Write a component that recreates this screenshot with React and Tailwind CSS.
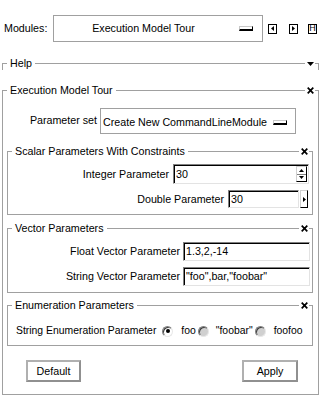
import React from 'react';

const CloseX = () => (
    <svg width="7" height="7" viewBox="0 0 7 7" className="shrink-0">
        <path d="M0.7 0.7L6.3 6.3M6.3 0.7L0.7 6.3" stroke="#000" strokeWidth="1.7" />
    </svg>
);

const DownArrow = () => (
    <svg width="7" height="4" viewBox="0 0 7 4" className="shrink-0">
        <path d="M0 0H7L3.5 4Z" fill="#000" />
    </svg>
);

// group frame: title sits on the top border, icon on the right end
const FrameHeader = ({ title, icon }) => (
    <div className="-mx-px -mt-[7px] flex h-[15px] items-center">
        <span className="h-px w-[5px] bg-[#a0a0a0]" />
        <span className="px-[3px] leading-none whitespace-nowrap">{title}</span>
        <span className="h-px flex-1 bg-[#a0a0a0]" />
        <span className="flex items-center pl-[2px] pr-px">{icon}</span>
        <span className="h-px w-[4px] bg-[#a0a0a0]" />
    </div>
);

const Frame = ({ title, icon, className, children }) => (
    <div className={`flex flex-col border-x border-b border-[#a0a0a0] ${className}`}>
        <FrameHeader title={title} icon={icon} />
        {children}
    </div>
);

const Sunken = ({ className, children }) => (
    <div className={`flex items-center border border-t-[#808080] border-l-[#808080] border-r-[#e3e3e3] border-b-[#e3e3e3] bg-white pl-[2px] shadow-[inset_1px_1px_0_#000] ${className}`}>
        {children}
    </div>
);

const MenuIndicator = ({ className }) => (
    <span className={`block h-[5px] w-[14px] shrink-0 border border-t-[#c8c8c8] border-l-[#c8c8c8] border-r-black border-b-2 border-b-black bg-white ${className}`} />
);

const Radio = ({ checked }) => (
    <span className={`flex h-[11px] w-[11px] shrink-0 items-center justify-center rounded-full border border-t-[#808080] border-l-[#808080] border-r-[#e8e8e8] border-b-[#e8e8e8] shadow-[inset_1px_1px_0_#404040] ${checked ? 'bg-white' : 'bg-[#d0d0d0]'}`}>
        {checked && <span className="h-[4px] w-[4px] rounded-full bg-black" />}
    </span>
);

const NavBox = ({ children, className }) => (
    <span className={`flex h-[10px] w-[9px] items-center justify-center border border-black text-[9px] leading-none ${className}`}>
        {children}
    </span>
);

const App = () => {
    return (
        <div className="h-[408px] w-[325px] overflow-hidden bg-white font-['Liberation_Sans',Arial,sans-serif] text-[10.7px] text-black">
            {/* module selector */}
            <div className="flex items-center pt-[15px]">
                <span className="w-[53px] pl-[4px]">Modules:</span>
                <div className="flex h-[27px] w-[210px] items-center border border-[#a0a0a0]">
                    <span className="flex-1 text-center">Execution Model Tour</span>
                    <MenuIndicator className="ml-[6px] mr-[9px]" />
                </div>
                <NavBox className="ml-[5px]">
                    <svg width="3" height="5" viewBox="0 0 3 5"><path d="M3 0V5L0 2.5Z" fill="#000" /></svg>
                </NavBox>
                <NavBox className="ml-[12px]">
                    <svg width="3" height="5" viewBox="0 0 3 5"><path d="M0 0V5L3 2.5Z" fill="#000" /></svg>
                </NavBox>
                <NavBox className="ml-[10px]">H</NavBox>
            </div>

            {/* collapsed help frame */}
            <div className="ml-[2px] mr-[6px] mt-[22px] flex h-[6px] flex-col border-x border-[#a0a0a0]">
                <FrameHeader title="Help" icon={<DownArrow />} />
            </div>

            {/* module panel */}
            <Frame title="Execution Model Tour" icon={<CloseX />} className="ml-[2px] mr-[6px] mt-[20px] pb-[12px]">
                <div className="mt-[10px] flex items-start justify-end pr-[22px]">
                    <span className="mr-[3px] pt-[4px]">Parameter set</span>
                    <div className="flex h-[26px] w-[196px] items-center border border-[#a0a0a0] pl-[2px] pt-[3px]">
                        <span className="flex-1 whitespace-nowrap">Create New CommandLineModule</span>
                        <MenuIndicator className="mr-[8px]" />
                    </div>
                </div>

                <Frame title="Scalar Parameters With Constraints" icon={<CloseX />} className="ml-[4px] mr-[5px] mt-[17px] pb-[6px]">
                    <div className="mt-[5px] flex items-center justify-end pr-[3px]">
                        <span className="mr-[4px]">Integer Parameter</span>
                        <Sunken className="h-[20px] w-[136px]">
                            <span className="flex-1">30</span>
                            <div className="mr-px flex h-[16px] w-[11px] flex-col border border-t-[#d0d0d0] border-l-[#d0d0d0] border-r-black border-b-black">
                                <span className="flex flex-1 items-center justify-center border-b border-[#808080]">
                                    <svg width="5" height="3" viewBox="0 0 5 3"><path d="M0 3H5L2.5 0Z" fill="#000" /></svg>
                                </span>
                                <span className="flex flex-1 items-center justify-center">
                                    <svg width="5" height="3" viewBox="0 0 5 3"><path d="M0 0H5L2.5 3Z" fill="#000" /></svg>
                                </span>
                            </div>
                        </Sunken>
                    </div>
                    <div className="mt-[6px] flex items-center justify-end pr-[4px]">
                        <span className="mr-[4px]">Double Parameter</span>
                        <Sunken className="h-[18px] w-[71px]">30</Sunken>
                        <span className="ml-px flex h-[18px] w-[8px] items-center justify-center border border-t-[#d0d0d0] border-l-[#d0d0d0] border-r-black border-b-black">
                            <svg width="3" height="5" viewBox="0 0 3 5"><path d="M0 0V5L3 2.5Z" fill="#000" /></svg>
                        </span>
                    </div>
                </Frame>

                <Frame title="Vector Parameters" icon={<CloseX />} className="ml-[4px] mr-[5px] mt-[13px] pb-[6px]">
                    <div className="mt-[6px] flex items-center justify-end pr-[2px]">
                        <span className="mr-[3px]">Float Vector Parameter</span>
                        <Sunken className="h-[19px] w-[127px]">1.3,2,-14</Sunken>
                    </div>
                    <div className="mt-[6px] flex items-center justify-end pr-[2px]">
                        <span className="mr-[3px]">String Vector Parameter</span>
                        <Sunken className="h-[19px] w-[127px]">"foo",bar,"foobar"</Sunken>
                    </div>
                </Frame>

                <Frame title="Enumeration Parameters" icon={<CloseX />} className="ml-[4px] mr-[5px] mt-[12px] pb-[6px]">
                    <div className="mt-[10px] flex h-[16px] items-center pl-[8px] whitespace-nowrap text-[10.4px]">
                        <span className="mr-[6px]">String Enumeration Parameter</span>
                        <Radio checked />
                        <span className="ml-[8px] mr-[2px]">foo</span>
                        <Radio />
                        <span className="ml-[7px] mr-[2px]">"foobar"</span>
                        <Radio />
                        <span className="ml-[8px]">foofoo</span>
                    </div>
                </Frame>

                <div className="mt-[14px] flex justify-between pl-[23px] pr-[20px]">
                    <button className="h-[22px] w-[55px] border-2 border-[#b0b0b0] border-r-[#909090] border-b-[#909090] bg-white">Default</button>
                    <button className="h-[22px] w-[56px] border-2 border-[#b0b0b0] border-r-[#909090] border-b-[#909090] bg-white">Apply</button>
                </div>
            </Frame>
        </div>
    );
};

export default App;
